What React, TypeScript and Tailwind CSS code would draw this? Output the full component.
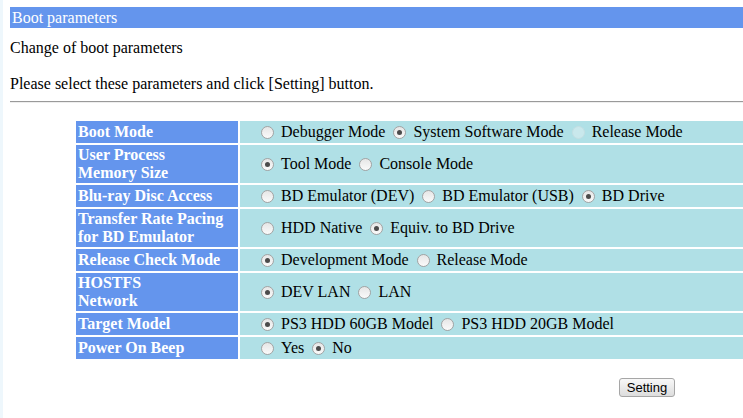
import React from "react";

type Opt = { label: string; checked?: boolean; disabled?: boolean };
type Row = { name: string[]; options: Opt[] };

const rows: Row[] = [
  {
    name: ["Boot Mode"],
    options: [
      { label: "Debugger Mode" },
      { label: "System Software Mode", checked: true },
      { label: "Release Mode", disabled: true },
    ],
  },
  {
    name: ["User Process", "Memory Size"],
    options: [{ label: "Tool Mode", checked: true }, { label: "Console Mode" }],
  },
  {
    name: ["Blu-ray Disc Access"],
    options: [
      { label: "BD Emulator (DEV)" },
      { label: "BD Emulator (USB)" },
      { label: "BD Drive", checked: true },
    ],
  },
  {
    name: ["Transfer Rate Pacing", "for BD Emulator"],
    options: [{ label: "HDD Native" }, { label: "Equiv. to BD Drive", checked: true }],
  },
  {
    name: ["Release Check Mode"],
    options: [{ label: "Development Mode", checked: true }, { label: "Release Mode" }],
  },
  {
    name: ["HOSTFS", "Network"],
    options: [{ label: "DEV LAN", checked: true }, { label: "LAN" }],
  },
  {
    name: ["Target Model"],
    options: [
      { label: "PS3 HDD 60GB Model", checked: true },
      { label: "PS3 HDD 20GB Model" },
    ],
  },
  {
    name: ["Power On Beep"],
    options: [{ label: "Yes" }, { label: "No", checked: true }],
  },
];

function Radio({ checked, disabled }: { checked?: boolean; disabled?: boolean }) {
  if (disabled) {
    return (
      <span className="ml-[5px] mr-[7px] inline-block h-[13px] w-[13px] shrink-0 rounded-full border border-[#c4dfe3] bg-[#c9e8ec]" />
    );
  }
  return (
    <span className="ml-[5px] mr-[7px] flex h-[13px] w-[13px] shrink-0 items-center justify-center rounded-full border border-[#a3a3a3] bg-gradient-to-b from-[#e6e6e6] to-[#fafafa]">
      {checked && <span className="h-[5px] w-[5px] rounded-full bg-[#4b4b4b]" />}
    </span>
  );
}

export default function App() {
  return (
    <div className="flex min-h-[418px] bg-white text-[16px] text-black [font-family:'Liberation_Serif',serif]">
      <div className="w-[3px] shrink-0 bg-[#eef7fc]" />
      <div className="flex min-w-0 flex-1 flex-col pl-[7px]">
        <div className="mt-[7px] h-[21px] bg-[#6495ed] pl-[2px] leading-[21px] text-white">
          Boot parameters
        </div>
        <p className="mt-[11px] leading-[18px]">Change of boot parameters</p>
        <p className="mt-[18px] leading-[18px]">
          Please select these parameters and click [Setting] button.
        </p>
        <div className="mt-[8px] h-[2px] border-t border-b border-t-[#9a9a9a] border-b-[#eeeeee]" />

        <div className="ml-[66px] mt-[18px] flex flex-col gap-[2px]">
          {rows.map((r) => (
            <div
              key={r.name.join(" ")}
              className={`grid grid-cols-[162px_1fr] gap-[2px] ${r.name.length > 1 ? "h-[38px]" : "h-[22px]"}`}
            >
              <div className="flex flex-col justify-center bg-[#6495ed] px-[2px] font-bold leading-[18px] text-white">
                {r.name.map((n) => (
                  <span key={n}>{n}</span>
                ))}
              </div>
              <div className="flex items-center whitespace-nowrap bg-[#b0e0e6] pl-[16px] leading-[18px]">
                {r.options.map((o) => (
                  <React.Fragment key={o.label}>
                    <Radio checked={o.checked} disabled={o.disabled} />
                    <span className="mr-[3px]">{o.label}</span>
                  </React.Fragment>
                ))}
              </div>
            </div>
          ))}
        </div>

        <div className="mt-[19px] flex pl-[609px]">
          <button
            type="button"
            className="block h-[19px] w-[56px] rounded-[3px] border border-[#a6a6a6] bg-gradient-to-b from-[#f8f8f8] to-[#dddddd] text-[13px] leading-[15px] text-black [font-family:'Liberation_Sans',Arial,sans-serif]"
          >
            Setting
          </button>
        </div>
      </div>
    </div>
  );
}
